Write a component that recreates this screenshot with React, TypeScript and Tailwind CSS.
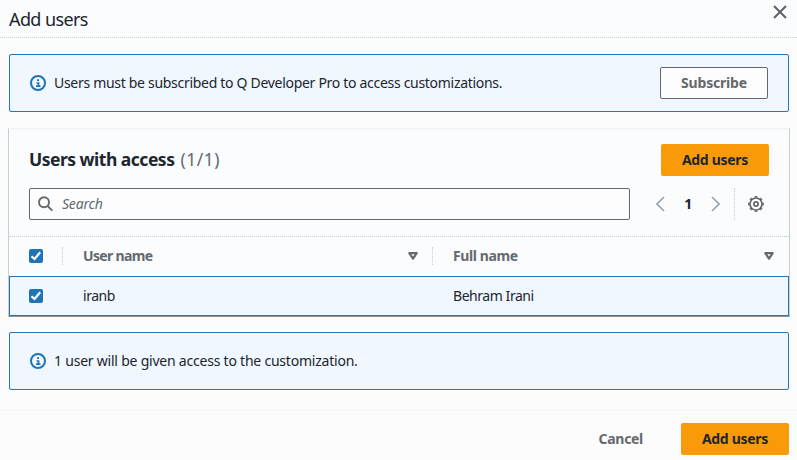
import React from "react";

function InfoIcon() {
  return (
    <svg width="16" height="16" viewBox="0 0 16 16" fill="none" stroke="#1f74b8" strokeWidth="2" className="shrink-0">
      <circle cx="8" cy="8" r="7" />
      <path d="M8.500 11.500V8H6.500M6 11.200h4.500" strokeWidth="1.700" />
      <path d="M7 5.200h2" strokeWidth="1.800" />
    </svg>
  );
}

function GearIcon() {
  return (
    <svg width="16" height="16" viewBox="0 0 16 16" fill="none" stroke="#64696e" className="ml-[13px] shrink-0">
      <circle cx="8" cy="8" r="6" strokeWidth="1.700" />
      <circle cx="8" cy="8" r="7.100" strokeWidth="1.600" pathLength="80" strokeDasharray="5 5" strokeDashoffset="-7.500" />
      <circle cx="8" cy="8" r="2.100" strokeWidth="1.800" />
    </svg>
  );
}

function CheckBox() {
  return (
    <span className="flex size-[14px] shrink-0 items-center justify-center rounded-[2px] bg-[#1f74b8]">
      <svg width="14" height="14" viewBox="0 0 14 14" fill="none" stroke="#fff" strokeWidth="2.200">
        <path d="M2.500 7.200l3 2.800 5.700-6.700" />
      </svg>
    </span>
  );
}

function SortIcon() {
  return (
    <svg width="10" height="8" viewBox="0 0 10 8" fill="none" stroke="#64696e" strokeWidth="2.200" strokeLinejoin="round" className="shrink-0">
      <path d="M1.300 1.100h7.400L5 6.700z" />
    </svg>
  );
}

function PrimaryButton() {
  return (
    <button className="flex h-8 w-[108px] items-center justify-center rounded-[2px] bg-[#f99b09] text-[14px] font-bold tracking-[-0.3px] text-[#20262d]">
      Add users
    </button>
  );
}

export default function App() {
  return (
    <div className="flex h-[460px] w-[797px] flex-col overflow-hidden bg-[#fcfcfc] font-['Noto_Sans','Open_Sans',sans-serif] text-[14px] leading-5 tracking-[-0.3px] text-[#20262d]">
      <header className="flex h-[38px] shrink-0 items-center justify-between border-b border-dotted border-[#c3ced5] bg-[#fafcfe] pr-[10px] pl-[9px]">
        <h1 className="text-[18px] leading-6 tracking-[-0.600px]">Add users</h1>
        <svg width="14" height="14" viewBox="0 0 14 14" fill="none" stroke="#5c6267" strokeWidth="2" className="mb-[13px]">
          <path d="M1 1l12 12M13 1L1 13" />
        </svg>
      </header>

      <main className="flex shrink-0 flex-col pt-4">
        <section className="mr-[8px] ml-[9px] flex h-[58px] items-center rounded-[2px] border border-[#2476b5] bg-[#f0f7fe] pr-5 pl-5">
          <InfoIcon />
          <p className="ml-2 flex-1 whitespace-nowrap">Users must be subscribed to Q Developer Pro to access customizations.</p>
          <button className="flex h-8 w-[108px] items-center justify-center rounded-[2px] border border-[#64696e] bg-[#fdfdfd] text-[14px] font-bold tracking-[-0.200px] text-[#64696e]">
            Subscribe
          </button>
        </section>

        <section className="mt-4 mr-[7px] ml-[8px] flex h-[189px] flex-col border border-t-[#eef3f7] border-r-[#c8cfd4] border-b-[#8a969e] border-l-[#c8cfd4] bg-[#fafcfe]">
          <div className="flex h-[47px] shrink-0 items-end justify-between pr-5 pl-5">
            <h2 className="flex gap-[6px] pb-[5px] text-[17.500px] leading-6 font-bold tracking-[-0.500px]">
              <span>Users with access</span>
              <span className="font-normal tracking-[0.500px] text-[#64696e]">(1/1)</span>
            </h2>
            <PrimaryButton />
          </div>
          <div className="mt-3 flex h-8 shrink-0 items-center pr-[24px] pl-5">
            <div className="flex h-8 w-[601px] shrink-0 items-center rounded-[2px] border border-[#64696e] bg-[#fdfdfd] pl-2">
              <svg width="16" height="16" viewBox="0 0 16 16" fill="none" stroke="#64696e" strokeWidth="1.900">
                <circle cx="6" cy="6.300" r="5" />
                <path d="M9.600 10l4.700 4.700" />
              </svg>
              <span className="ml-2 tracking-[-0.200px] text-[#64696e] italic">Search</span>
            </div>
            <svg width="9" height="16" viewBox="0 0 9 16" fill="none" stroke="#98a4ab" strokeWidth="1.600" className="ml-[26px] shrink-0">
              <path d="M8 1L1 8l7 7" />
            </svg>
            <b className="w-[46px] shrink-0 text-center">1</b>
            <svg width="9" height="16" viewBox="0 0 9 16" fill="none" stroke="#98a4ab" strokeWidth="1.600" className="shrink-0">
              <path d="M1 1l7 7-7 7" />
            </svg>
            <span className="ml-[14px] h-8 border-l border-dotted border-[#c3ced5]" />
            <GearIcon />
          </div>

          <div className="mt-4 flex h-10 shrink-0 items-center border-t border-dotted border-[#c3ced5] pr-[15px] pb-[2px] pl-5 font-bold tracking-[-0.550px] text-[#64696e]">
            <CheckBox />
            <span className="ml-[19px] h-[18px] border-l border-dotted border-[#c3ced5]" />
            <span className="ml-5 w-[325px] tracking-[-0.650px]">User name</span>
            <SortIcon />
            <span className="ml-[14px] h-[18px] border-l border-dotted border-[#c3ced5]" />
            <span className="ml-5 flex-1 tracking-[-0.400px]">Full name</span>
            <SortIcon />
          </div>
          <div className="flex h-10 shrink-0 items-center border border-[#2476b5] bg-[#f0f7fe] pl-[19px] tracking-[-0.450px]">
            <CheckBox />
            <span className="ml-10 w-[370px]">iranb</span>
            <span>Behram Irani</span>
          </div>
        </section>

        <section className="mt-[15px] mr-[8px] ml-[9px] flex h-[58px] items-center rounded-[2px] border border-[#2476b5] bg-[#f0f7fe] pl-5">
          <InfoIcon />
          <p className="ml-2 tracking-[-0.220px] whitespace-nowrap">1 user will be given access to the customization.</p>
        </section>
      </main>

      <footer className="mt-5 flex h-[50px] shrink-0 items-start justify-end border-t border-[#f0f7fb] pt-3 pr-2">
        <button className="mr-[38px] h-8 text-[14px] font-bold tracking-[-0.300px] text-[#64696e]">Cancel</button>
        <PrimaryButton />
      </footer>
    </div>
  );
}
